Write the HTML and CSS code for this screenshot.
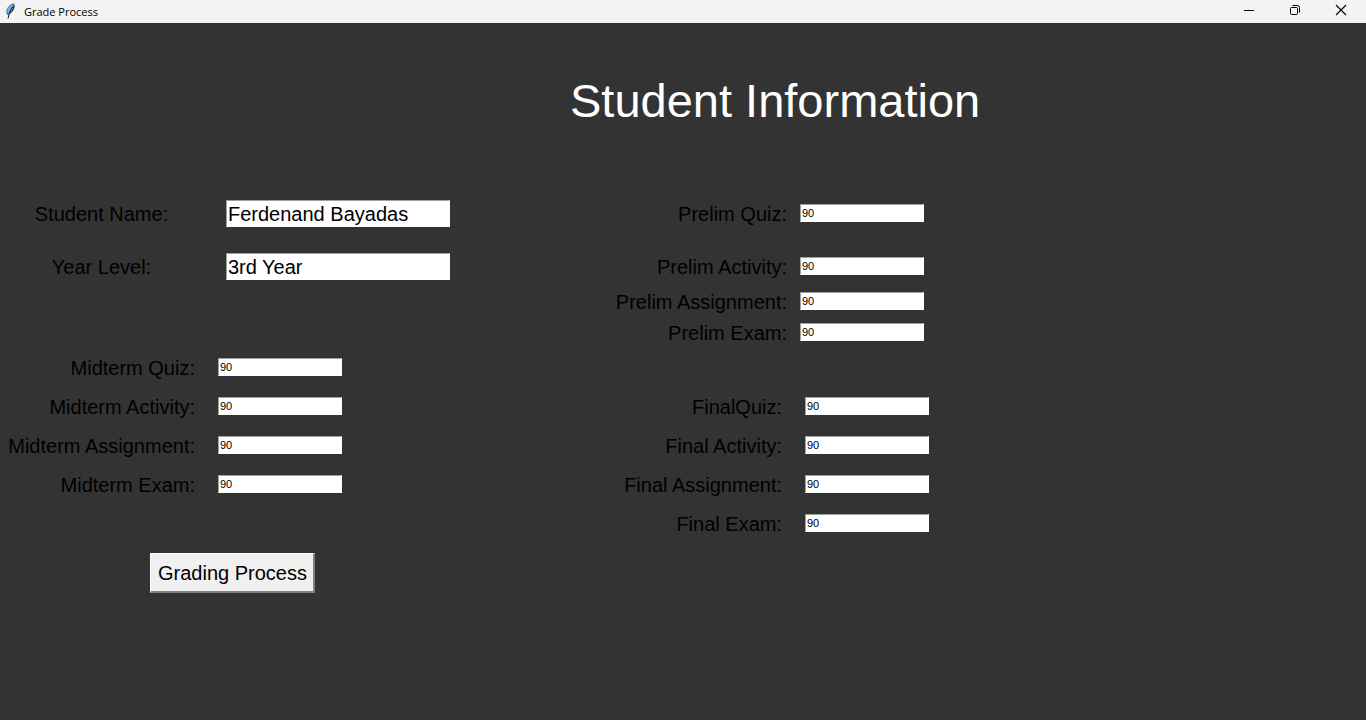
FILE: index.html
```html
<!DOCTYPE html>
<html lang="en">
<head>
<meta charset="utf-8">
<title>Grade Process</title>
<link rel="stylesheet" href="styles.css">
</head>
<body>
<header class="titlebar">
  <svg class="feather" viewBox="0 0 16 16" width="16" height="16" aria-hidden="true">
    <path d="M12 .8C8.400 1.200 5.300 4.400 4.800 8.200l.4 3.200 2-.7c3-1.600 4.800-4.500 5-7.600z" fill="#6fb0f5" stroke="#3b4656" stroke-width=".7"/>
    <path d="M10.600 3.500 7.500 9.500 6 15.500" fill="none" stroke="#10151c" stroke-width="1"/>
    <path d="M11.800 2.500C12 6 10 9 7.500 10.600" fill="none" stroke="#141a24" stroke-width="1"/>
  </svg>
  <span class="caption">Grade Process</span>
  <div class="window-buttons">
    <button class="window-button" type="button" aria-label="Minimize">
      <svg viewBox="0 0 12 12" width="12" height="12"><path d="M1 6.500h10" fill="none" stroke="#000"/></svg>
    </button>
    <button class="window-button" type="button" aria-label="Restore">
      <svg viewBox="0 0 12 12" width="12" height="12"><rect x="1.500" y="3.500" width="7" height="7" rx="1" fill="none" stroke="#000"/><path d="M3.500 1.500H8.500a2 2 0 0 1 2 2V8.500" fill="none" stroke="#000"/></svg>
    </button>
    <button class="window-button" type="button" aria-label="Close">
      <svg viewBox="0 0 12 12" width="12" height="12"><path d="M1 1l10 10M11 1L1 11" fill="none" stroke="#000" stroke-width="1.100"/></svg>
    </button>
  </div>
</header>
<main class="content">
  <h1 class="heading">Student Information</h1>
  <form class="form">
    <div class="column">
      <div class="group student">
        <label for="name">Student Name:</label><input class="entry large" id="name" type="text" value="Ferdenand Bayadas">
        <label for="year">Year Level:</label><input class="entry large" id="year" type="text" value="3rd Year">
      </div>
      <div class="group midterm">
        <label for="mq">Midterm Quiz:</label><input class="entry" id="mq" type="text" value="90">
        <label for="ma">Midterm Activity:</label><input class="entry" id="ma" type="text" value="90">
        <label for="ms">Midterm Assignment:</label><input class="entry" id="ms" type="text" value="90">
        <label for="me">Midterm Exam:</label><input class="entry" id="me" type="text" value="90">
      </div>
      <button class="process" type="button">Grading Process</button>
    </div>
    <div class="column">
      <div class="group prelim">
        <label for="pq">Prelim Quiz:</label><input class="entry" id="pq" type="text" value="90">
        <label for="pa">Prelim Activity:</label><input class="entry" id="pa" type="text" value="90">
        <label for="ps">Prelim Assignment:</label><input class="entry" id="ps" type="text" value="90">
        <label for="pe">Prelim Exam:</label><input class="entry" id="pe" type="text" value="90">
      </div>
      <div class="group final">
        <label for="fq">FinalQuiz:</label><input class="entry" id="fq" type="text" value="90">
        <label for="fa">Final Activity:</label><input class="entry" id="fa" type="text" value="90">
        <label for="fs">Final Assignment:</label><input class="entry" id="fs" type="text" value="90">
        <label for="fe">Final Exam:</label><input class="entry" id="fe" type="text" value="90">
      </div>
    </div>
  </form>
</main>
</body>
</html>
```
FILE: styles.css
```css
* {
  box-sizing: border-box;
}

body {
  margin: 0;
  min-height: 100vh;
  background: #333;
  color: #000;
  font-family: "Liberation Sans", Arial, sans-serif;
  font-size: 20px;
}

.titlebar {
  display: flex;
  align-items: center;
  height: 23px;
  padding: 0 2px;
  background: #f3f3f3;
}

.feather {
  margin-bottom: 2px;
}

.caption {
  margin-left: 6px;
  font: 11px/22px "Open Sans", sans-serif;
}

.window-buttons {
  display: flex;
  margin-left: auto;
}

.window-button {
  display: flex;
  justify-content: center;
  width: 46px;
  height: 23px;
  padding: 4px 0 0;
  border: 0;
  background: transparent;
}

.heading {
  margin: 0;
  padding: 48px 0 69px 570px;
  color: #fff;
  font-size: 47px;
  font-weight: 400;
  line-height: 60px;
  white-space: nowrap;
}

.form {
  display: grid;
  grid-template-columns: 568px 1fr;
}

.group {
  display: grid;
  grid-auto-rows: 27px;
  row-gap: 12px;
}

.group label {
  line-height: 29px;
  text-align: right;
  white-space: nowrap;
}

.entry {
  width: 124px;
  height: 18px;
  margin: 4px 0 5px;
  padding: 0 1px;
  border: 1px solid #fff;
  border-top-color: #a0a0a0;
  border-left-color: #a0a0a0;
  border-radius: 0;
  background: #fff;
  color: #000;
  font: 11px "Liberation Sans", Arial, sans-serif;
}

.entry.large {
  width: 224px;
  height: 27px;
  margin: 0;
  padding-top: 2px;
  font-size: 20px;
}

.student {
  grid-template-columns: 203px 224px;
  column-gap: 23px;
  row-gap: 26px;
}

.group.student label {
  text-align: center;
}

.midterm {
  grid-template-columns: 195px 124px;
  column-gap: 23px;
  margin-top: 74px;
}

.prelim {
  grid-template-columns: 219px 124px;
  grid-template-rows: 53px 35px 31px 27px;
  column-gap: 13px;
  row-gap: 0;
}

.final {
  grid-template-columns: 214px 124px;
  column-gap: 23px;
  margin-top: 47px;
}

.process {
  display: block;
  height: 40px;
  margin: 55px 0 48px 150px;
  padding: 2px 6px 0 7px;
  border: 1px solid #fff;
  border-right: 2px solid #808080;
  border-bottom: 2px solid #808080;
  background: #f0f0f0;
  color: #000;
  font: 20px "Liberation Sans", Arial, sans-serif;
}
```
